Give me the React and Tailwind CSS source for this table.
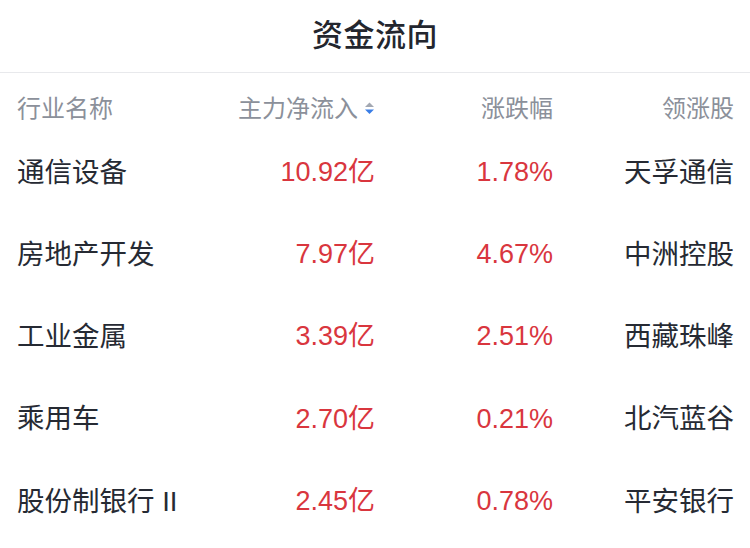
const ROWS = [
  { name: '通信设备', flow: '10.92亿', pct: '1.78%', lead: '天孚通信' },
  { name: '房地产开发', flow: '7.97亿', pct: '4.67%', lead: '中洲控股' },
  { name: '工业金属', flow: '3.39亿', pct: '2.51%', lead: '西藏珠峰' },
  { name: '乘用车', flow: '2.70亿', pct: '0.21%', lead: '北汽蓝谷' },
  { name: '股份制银行 II', flow: '2.45亿', pct: '0.78%', lead: '平安银行' },
];

const FONT = { fontFamily: '"Liberation Sans", "Noto Sans CJK SC", sans-serif' };

function SortIcon() {
  return (
    <svg width="11" height="13" viewBox="0 0 11 13" className="ml-[6px]">
      <path d="M5.5 0.5 L10 5 L1 5 Z" fill="#a3a8b2" />
      <path d="M1 7.5 L10 7.5 L5.5 12 Z" fill="#3a7ee6" />
    </svg>
  );
}

export default function App() {
  return (
    <div className="w-[750px] h-[548px] bg-white overflow-hidden" style={FONT}>
      {/* Title */}
      <div className="h-[73px] flex items-center justify-center border-b border-[#e8e9ec]">
        <div className="text-[31px] font-medium text-[#23262e] tracking-[0.5px] mt-[1px]">资金流向</div>
      </div>

      {/* Header */}
      <div className="grid grid-cols-[183px_175px_178px_181px] pl-[17px] pr-[16px] h-[58px] items-center text-[24px] text-[#8b909a] pt-[13px]">
        <div>行业名称</div>
        <div className="flex items-center justify-end pr-[-2px]">
          主力净流入
          <SortIcon />
        </div>
        <div className="text-right">涨跌幅</div>
        <div className="text-right">领涨股</div>
      </div>

      {/* Rows */}
      {ROWS.map((r) => (
        <div
          key={r.name}
          className="grid grid-cols-[183px_175px_178px_181px] pl-[17px] pr-[16px] h-[82.3px] items-center text-[27.5px]"
        >
          <div className="text-[#262a33] whitespace-nowrap">{r.name}</div>
          <div className="text-right text-[#d9363e] text-[27px]">{r.flow}</div>
          <div className="text-right text-[#d9363e] text-[27px]">{r.pct}</div>
          <div className="text-right text-[#262a33]">{r.lead}</div>
        </div>
      ))}
    </div>
  );
}
